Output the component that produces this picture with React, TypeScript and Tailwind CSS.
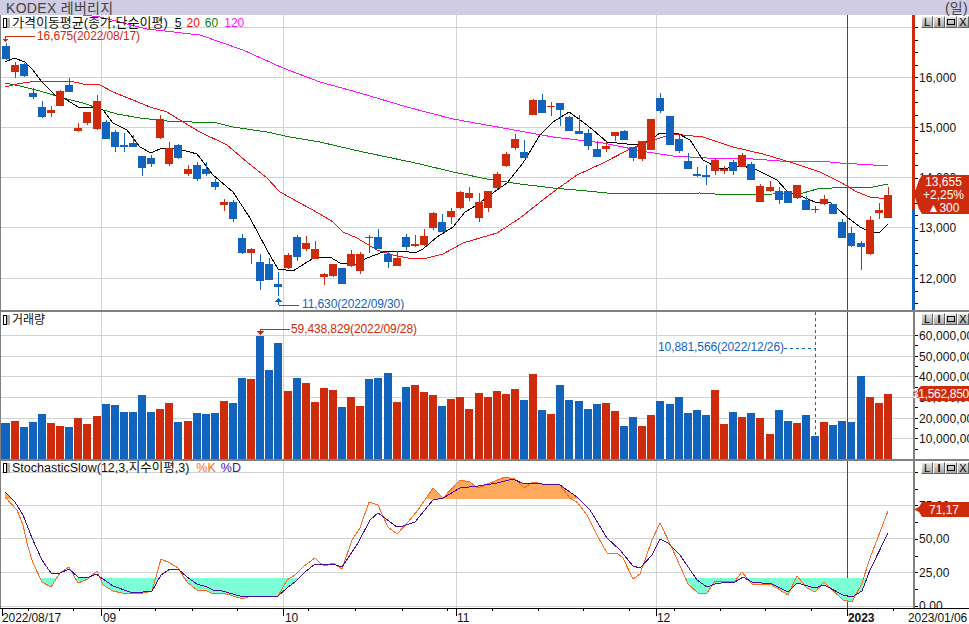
const FONT = '"Liberation Sans","Noto Sans CJK KR",sans-serif';
const RED = '#ce2b0c';
const BLUE = '#1163bd';
const GRID = '#d2d2d2';

// color, wick high, body top, body bottom, wick low, volume bar top
const candles: [string, number, number, number, number, number][] = [
  ['b', 43, 46, 59, 60, 423], ['r', 62, 65, 72, 78, 421], ['b', 63, 64, 76, 77, 427], ['b', 88, 93, 97, 99, 422],
  ['b', 101, 107, 117, 118, 414], ['r', 106, 110, 113, 117, 423], ['r', 90, 91, 106, 106, 426], ['b', 78, 85, 92, 92, 427],
  ['r', 123, 128, 131, 132, 418], ['r', 112, 112, 123, 125, 424], ['r', 95, 101, 129, 130, 416], ['b', 120, 122, 139, 139, 404],
  ['b', 130, 132, 147, 152, 405], ['b', 133, 145, 147, 152, 412], ['b', 135, 143, 147, 147, 412], ['b', 156, 156, 168, 176, 395],
  ['b', 155, 158, 164, 167, 412], ['r', 115, 119, 138, 139, 409], ['r', 142, 148, 164, 166, 403], ['b', 144, 145, 158, 159, 422],
  ['r', 165, 169, 174, 176, 421], ['b', 162, 165, 179, 181, 413], ['b', 162, 169, 174, 176, 414], ['b', 179, 182, 187, 190, 413],
  ['r', 199, 202, 205, 211, 401], ['b', 200, 202, 219, 222, 403], ['b', 234, 238, 253, 254, 378], ['r', 248, 249, 253, 264, 379],
  ['b', 254, 262, 281, 290, 336], ['b', 258, 264, 280, 280, 370], ['b', 272, 284, 287, 296, 343], ['r', 253, 255, 268, 269, 391],
  ['b', 235, 237, 257, 261, 378], ['r', 236, 243, 249, 251, 383], ['r', 241, 249, 259, 259, 402], ['r', 273, 274, 277, 285, 388],
  ['r', 264, 264, 276, 277, 390], ['b', 268, 268, 284, 284, 407], ['r', 250, 254, 266, 267, 397], ['r', 252, 254, 271, 274, 406],
  ['b', 235, 237, 238, 253, 379], ['b', 229, 237, 249, 249, 378], ['b', 252, 254, 262, 268, 373], ['r', 251, 258, 266, 266, 402],
  ['b', 234, 237, 247, 250, 387], ['r', 235, 244, 246, 247, 385], ['r', 229, 236, 245, 246, 392], ['r', 212, 213, 228, 230, 395],
  ['b', 214, 222, 232, 232, 406], ['r', 208, 211, 217, 224, 399], ['r', 191, 192, 208, 209, 397], ['r', 187, 193, 198, 201, 409],
  ['r', 193, 202, 218, 222, 393], ['r', 191, 191, 208, 212, 397], ['r', 172, 174, 188, 189, 391], ['r', 152, 154, 166, 167, 394],
  ['r', 134, 139, 148, 150, 389], ['b', 140, 152, 158, 158, 400], ['r', 99, 100, 115, 115, 374], ['b', 94, 100, 113, 113, 410],
  ['r', 102, 106, 107, 116, 414], ['b', 103, 103, 110, 126, 385], ['b', 116, 117, 131, 131, 400], ['b', 115, 131, 134, 134, 401],
  ['b', 129, 133, 146, 150, 409], ['b', 141, 149, 157, 157, 404], ['r', 142, 146, 149, 152, 403], ['r', 132, 132, 136, 141, 411],
  ['b', 130, 131, 140, 140, 426], ['b', 147, 147, 158, 161, 417], ['r', 141, 141, 159, 161, 426], ['r', 119, 119, 150, 150, 415],
  ['b', 93, 98, 111, 113, 401], ['b', 116, 116, 145, 145, 404], ['b', 135, 139, 151, 153, 397], ['b', 153, 161, 169, 169, 413],
  ['b', 167, 174, 176, 177, 410], ['b', 165, 175, 177, 185, 415], ['r', 158, 160, 171, 175, 390], ['r', 166, 169, 171, 174, 424],
  ['b', 160, 162, 171, 175, 412], ['r', 153, 155, 167, 167, 417], ['b', 162, 164, 180, 180, 413], ['r', 184, 186, 202, 202, 418],
  ['r', 181, 187, 191, 192, 434], ['b', 187, 191, 200, 204, 410], ['b', 191, 191, 203, 203, 421], ['r', 185, 185, 198, 199, 423],
  ['b', 196, 200, 210, 210, 415], ['b', 206, 209, 210, 213, 436], ['r', 195, 199, 204, 205, 422], ['b', 204, 204, 214, 214, 425],
  ['b', 219, 222, 238, 238, 421], ['b', 227, 233, 246, 247, 422], ['b', 241, 243, 247, 270, 376], ['r', 216, 220, 254, 255, 397],
  ['r', 203, 210, 213, 219, 403], ['r', 187, 195, 218, 218, 394],
];

const ma5 = '5,62 14,58 25,62 33,70 42,82 55,95 67,100 78,107 92,107 103,110 113,123 127,130 140,147 151,153 162,148 173,148 190,152 197,154 213,175 233,192 250,218 267,250 278,269 293,271 312,259 320,257 330,257 340,263 355,265 367,258 383,252 403,251 415,253 423,249 437,237 453,227 465,212 477,205 490,195 507,183 523,163 540,135 553,122 569,112 583,122 593,130 607,142 627,144 640,145 650,140 660,133 677,133 690,140 703,160 720,169 743,166 757,170 777,180 787,191 803,197 815,202 830,202 847,217 860,227 870,232 880,232 888,224';
const ma20 = '5,87 17,84 30,82 57,81 70,81 83,84 100,85 113,92 133,100 150,107 167,112 183,122 200,132 227,145 247,162 267,178 280,192 300,203 320,214 333,222 343,232 357,238 377,250 393,255 413,259 427,258 443,254 463,243 497,233 520,218 553,192 577,175 603,163 630,149 640,145 657,139 673,134 703,137 733,147 763,154 793,163 820,172 840,182 857,192 870,197 888,199';
const ma60 = '5,83 20,86 40,91 67,99 83,103 100,109 117,114 140,118 167,121 217,123 233,127 267,132 290,137 320,142 337,146 363,152 387,157 420,164 453,172 487,179 520,184 553,188 587,191 607,193 640,194 700,193 730,195 773,194 803,193 817,189 847,187 873,187 888,184';
const ma120 = '83,15 100,17 147,29 200,35 243,50 283,68 320,82 360,93 407,107 453,119 503,128 553,137 603,143 647,152 673,156 707,158 740,158 780,161 820,161 840,163 873,165 888,165';

const pctK = '5,497 17,510 23,525 28,547 33,563 42,582 51,587 60,573 69,567 78,583 88,579 97,571 103,585 113,591 122,593 143,593 152,591 161,559 170,563 178,568 187,582 197,590 205,590 213,594 223,593 233,596 243,599 250,596 278,596 287,580 295,575 303,567 315,558 320,563 325,566 333,563 342,569 352,540 360,528 369,502 378,505 388,527 397,534 408,522 418,510 433,488 443,498 460,480 470,482 478,488 490,483 505,477 515,479 524,488 533,482 542,484 560,485 570,498 578,503 587,515 597,535 607,553 617,553 623,558 633,579 640,574 652,540 660,523 672,548 688,584 698,593 707,593 715,581 728,582 735,581 742,572 752,584 772,585 788,595 797,576 807,588 815,592 824,582 843,600 852,602 862,583 870,558 888,511';
const pctD = '5,492 15,502 23,515 32,538 42,560 51,573 60,573 69,569 78,577 87,578 96,574 103,579 113,586 130,592 143,592 152,591 161,575 170,569 178,569 187,577 197,584 207,587 213,590 222,591 240,596 278,596 287,588 295,582 305,572 315,564 320,565 333,564 342,567 358,543 370,520 378,513 397,527 403,526 415,522 433,500 443,498 460,488 478,486 497,483 513,479 524,484 533,483 542,484 560,485 577,497 590,510 607,538 620,550 633,566 640,568 652,555 660,539 668,543 680,555 697,580 707,587 715,584 728,582 735,582 743,577 752,582 772,584 788,592 797,583 815,588 824,585 843,595 852,597 862,591 870,570 888,533';

const xOf = (i: number) => Math.round(5.6 + 9.095 * i);

function Grid({ ys, top, bottom }: { ys: number[]; top: number; bottom: number }) {
  return (
    <g shapeRendering="crispEdges">
      {ys.map((y) => (
        <line key={y} x1={1} x2={913} y1={y + 0.5} y2={y + 0.5} stroke={GRID} />
      ))}
      {[101, 283, 456, 656].map((x) => (
        <line key={x} x1={x + 0.5} x2={x + 0.5} y1={top} y2={bottom} stroke={GRID} />
      ))}
      <line x1={847.5} x2={847.5} y1={top} y2={bottom} stroke="#d0140c" />
      <rect x={0} y={top} width={1} height={bottom - top} fill="#808080" />
    </g>
  );
}

function Label({ x, y, color, children }: { x: number; y: number; color: string; children: string }) {
  return (
    <text x={x} y={y} fill={color} fontSize={12} fontFamily={FONT} letterSpacing="-0.1">
      {children}
    </text>
  );
}

function Marker() {
  return (
    <span className="mr-[1px] flex h-[11px] w-[8px] shrink-0 items-center">
      <span className="h-[10px] w-[4px] border border-black bg-white" />
      <span className="h-[10px] w-[3px] bg-[#b0b0b0]" />
    </span>
  );
}

function PanelButtons({ dim }: { dim?: boolean }) {
  const cls =
    'flex h-[12px] w-[12px] items-center justify-center border border-t-white border-l-white border-r-[#606060] border-b-[#606060] bg-gradient-to-b from-[#e4e4e4] to-[#a8a8a8] text-[11px] leading-none text-black';
  return (
    <div className="absolute right-0 top-[1px] flex" style={{ fontFamily: FONT }}>
      <div className={cls}>L</div>
      <div className={cls + ' font-bold'}>I</div>
      <div className={cls}>
        <span className="h-[6px] w-[8px] border border-black" />
      </div>
      <div className={dim ? cls + ' text-[#9a9a9a]' : cls}>X</div>
    </div>
  );
}

function Badge({ y, h, lines }: { y: number; h: number; lines: string[] }) {
  const mid = y + h / 2;
  return (
    <g>
      <polygon
        points={`914,${mid} 919,${y + 5} 922,${y} 969,${y} 969,${y + h} 922,${y + h} 919,${y + h - 5}`}
        fill={RED}
      />
      {lines.map((t, i) => (
        <text
          key={t}
          x={lines.length === 3 ? 943.5 : 944}
          y={y + (h - lines.length * 13) / 2 + 11 + i * 13}
          fill="#fff"
          fontSize={12}
          fontFamily={FONT}
          textAnchor="middle"
        >
          {t}
        </text>
      ))}
    </g>
  );
}

function AxisTicks({ step, from, to, labels }: { step: number; from: number; to: number; labels: [number, string][] }) {
  const marks: number[] = [];
  for (let y = from; y <= to; y += step) marks.push(Math.round(y));
  return (
    <g>
      <g shapeRendering="crispEdges">
        {marks.map((y) => (
          <line key={y} x1={915} x2={918} y1={y + 0.5} y2={y + 0.5} stroke="#000" />
        ))}
      </g>
      {labels.map(([y, t]) => (
        <text key={t} x={919} y={y + 5} fill="#111" fontSize={12} fontFamily={FONT} letterSpacing="0.1">
          {t}
        </text>
      ))}
    </g>
  );
}

function PricePanel() {
  return (
    <div className="relative flex h-[295px]">
      <svg viewBox="0 15 913 295" className="h-[295px] w-[913px]">
        <Grid ys={[27, 77, 127, 177, 227, 278]} top={15} bottom={310} />
        <g fill="none" shapeRendering="crispEdges">
          <polyline points={ma120} stroke="#ff10ff" />
          <polyline points={ma60} stroke="#0a800a" />
          <polyline points={ma20} stroke="#f01010" />
          <polyline points={ma5} stroke="#000" />
        </g>
        <g shapeRendering="crispEdges">
          {candles.map(([c, hi, top, bot, lo], i) => {
            const x = xOf(i);
            const fill = c === 'r' ? RED : BLUE;
            return (
              <g key={i} fill={fill}>
                <rect x={x} y={hi} width={1} height={lo - hi} />
                <rect x={x - 4} y={top} width={8} height={bot - top} />
              </g>
            );
          })}
          <path d="M5.5 36H35M5.5 36V41" stroke={RED} fill="none" />
          <path d="M2 39H9L5.5 42Z" fill={RED} />
          <path d="M278.5 305H299M278.5 305V299" stroke={BLUE} fill="none" />
          <path d="M275 302H282L278.5 298Z" fill={BLUE} />
          <rect x={912} y={15} width={1} height={194} fill={RED} />
          <rect x={912} y={209} width={1} height={101} fill={BLUE} />
        </g>
        <Label x={37} y={40} color={RED}>16,675(2022/08/17)</Label>
        <Label x={302} y={308} color={BLUE}>11,630(2022/09/30)</Label>
      </svg>
      <svg viewBox="913 15 56 295" className="h-[295px] w-[56px]">
        <g shapeRendering="crispEdges">
          <rect x={913} y={15} width={2} height={194} fill={RED} />
          <rect x={913} y={209} width={2} height={101} fill={BLUE} />
        </g>
        <AxisTicks
          step={12.55}
          from={27}
          to={305}
          labels={[[77, '16,000'], [127, '15,000'], [177, '14,000'], [227, '13,000'], [278, '12,000']]}
        />
        <Badge y={175} h={39} lines={['13,655', '+2,25%', '▲300']} />
      </svg>
      <div className="absolute left-[3px] top-[1px] flex h-[14px] items-center text-[12px] text-[#111]" style={{ fontFamily: FONT }}>
        <Marker />
        <span className="text-[13px]">가격이동평균(종가,단순이평)</span>
        <span className="ml-[7px] underline">5</span>
        <span className="ml-[5px] text-[#f01010]">20</span>
        <span className="ml-[5px] text-[#0a800a]">60</span>
        <span className="ml-[6px] text-[#ff10ff]">120</span>
      </div>
      <PanelButtons dim />
    </div>
  );
}

function VolumePanel() {
  return (
    <div className="relative flex h-[147px]">
      <svg viewBox="0 312 913 147" className="h-[147px] w-[913px]">
        <Grid ys={[335, 356, 376, 397, 418, 438]} top={312} bottom={459} />
        <g shapeRendering="crispEdges">
          {candles.map(([c, , , , , v], i) => {
            const x = xOf(i);
            return <rect key={i} x={i === 0 ? 1 : x - 4} y={v} width={i === 0 ? 9 : 8} height={459 - v} fill={c === 'r' ? RED : BLUE} />;
          })}
          <path d="M260.5 329H290M260.5 329V332" stroke={RED} fill="none" />
          <path d="M257 331H264L260.5 335Z" fill={RED} />
          <path d="M784 348.5H815.5M815.5 312V436" stroke={BLUE} strokeDasharray="3 3" fill="none" />
        </g>
        <Label x={291} y={333} color={RED}>59,438,829(2022/09/28)</Label>
        <Label x={658} y={351} color={BLUE}>10,881,566(2022/12/26)</Label>
      </svg>
      <svg viewBox="913 312 56 147" className="h-[147px] w-[56px]">
        <rect x={913} y={312} width={2} height={147} fill="#808080" shapeRendering="crispEdges" />
        <AxisTicks
          step={10.32}
          from={335}
          to={456}
          labels={[[335, '60,000,000'], [356, '50,000,000'], [376, '40,000,000'], [397, '30,000,000'], [418, '20,000,000'], [438, '10,000,000']]}
        />
        <polygon points="914,393 919,388 921,386 969,386 969,401 921,401 919,398" fill={RED} />
        <text x={969} y={398} fill="#fff" fontSize={12} fontFamily={FONT} textAnchor="end" letterSpacing="-0.3">
          31,562,850
        </text>
      </svg>
      <div className="absolute left-[3px] top-[1px] flex h-[14px] items-center text-[12px] text-[#111]" style={{ fontFamily: FONT }}>
        <Marker />
        <span>거래량</span>
      </div>
      <PanelButtons />
    </div>
  );
}

function StochPanel() {
  const closeAt = (pts: string, y: number) => `${pts} 888,${y} 5,${y}`;
  return (
    <div className="relative flex h-[147px]">
      <svg viewBox="0 461 913 147" className="h-[147px] w-[913px]">
        <defs>
          <clipPath id="below20">
            <rect x={0} y={578} width={913} height={30} />
          </clipPath>
          <clipPath id="above80">
            <rect x={0} y={461} width={913} height={38} />
          </clipPath>
        </defs>
        <Grid ys={[472, 505, 538, 572, 606]} top={461} bottom={608} />
        <g shapeRendering="crispEdges" stroke="none">
          <g clipPath="url(#below20)" fill="#7dffd6">
            <polygon points={closeAt(pctK, 578)} />
            <polygon points={closeAt(pctD, 578)} />
          </g>
          <g clipPath="url(#above80)" fill="#ffa95c">
            <polygon points={closeAt(pctK, 499)} />
            <polygon points={closeAt(pctD, 499)} />
          </g>
        </g>
        <g fill="none" shapeRendering="crispEdges">
          <polyline points={pctK} stroke="#ff6a1c" />
          <polyline points={pctD} stroke="#4a0d9c" />
        </g>
      </svg>
      <svg viewBox="913 461 56 147" className="h-[147px] w-[56px]">
        <rect x={913} y={461} width={2} height={147} fill="#808080" shapeRendering="crispEdges" />
        <AxisTicks
          step={16.7}
          from={472}
          to={606}
          labels={[[505, '75,00'], [538, '50,00'], [572, '25,00'], [605, '0,00']]}
        />
        <Badge y={502} h={15} lines={['71,17']} />
      </svg>
      <div className="absolute left-[3px] top-0 flex h-[14px] items-center text-[12.5px] text-[#111]" style={{ fontFamily: FONT }}>
        <Marker />
        <span>StochasticSlow(12,3,지수이평,3)</span>
        <span className="ml-[7px] text-[#ff6a1c]">%K</span>
        <span className="ml-[5px] text-[#4a0d9c]">%D</span>
      </div>
      <PanelButtons />
    </div>
  );
}

function TimeAxis() {
  const minor = [28, 73, 119, 155, 192, 237, 308, 355, 402, 447, 492, 538, 583, 629, 674, 720, 765, 811, 893];
  const major = [2, 101, 283, 456, 656, 847];
  return (
    <svg viewBox="0 608 969 16" className="h-[16px] w-[969px]">
      <g shapeRendering="crispEdges">
        <rect x={0} y={608} width={969} height={1} fill="#000" />
        {minor.map((x) => (
          <rect key={x} x={x} y={608} width={1} height={3} fill="#000" />
        ))}
        {major.map((x) => (
          <rect key={x} x={x} y={608} width={1} height={8} fill="#000" />
        ))}
      </g>
      <g fontSize={12} fontFamily={FONT} fill="#111" letterSpacing="-0.1">
        <text x={2} y={622}>2022/08/17</text>
        <text x={103} y={622}>09</text>
        <text x={285} y={622}>10</text>
        <text x={457} y={622}>11</text>
        <text x={657} y={622}>12</text>
        <text x={848} y={622} fontWeight={700}>2023</text>
        <text x={908} y={622}>2023/01/06</text>
      </g>
    </svg>
  );
}

export default function App() {
  return (
    <div className="flex h-[624px] w-[969px] flex-col overflow-hidden bg-white">
      <div
        className="flex h-[15px] items-center justify-between bg-[#cfcce3] pl-[6px] pr-[1px] text-[14px] leading-none tracking-[0.3px] text-[#444]"
        style={{ fontFamily: FONT }}
      >
        <span>KODEX 레버리지</span>
        <span>(일)</span>
      </div>
      <PricePanel />
      <div className="h-[2px] bg-[#808080]" />
      <VolumePanel />
      <div className="h-[2px] bg-[#808080]" />
      <StochPanel />
      <TimeAxis />
    </div>
  );
}
